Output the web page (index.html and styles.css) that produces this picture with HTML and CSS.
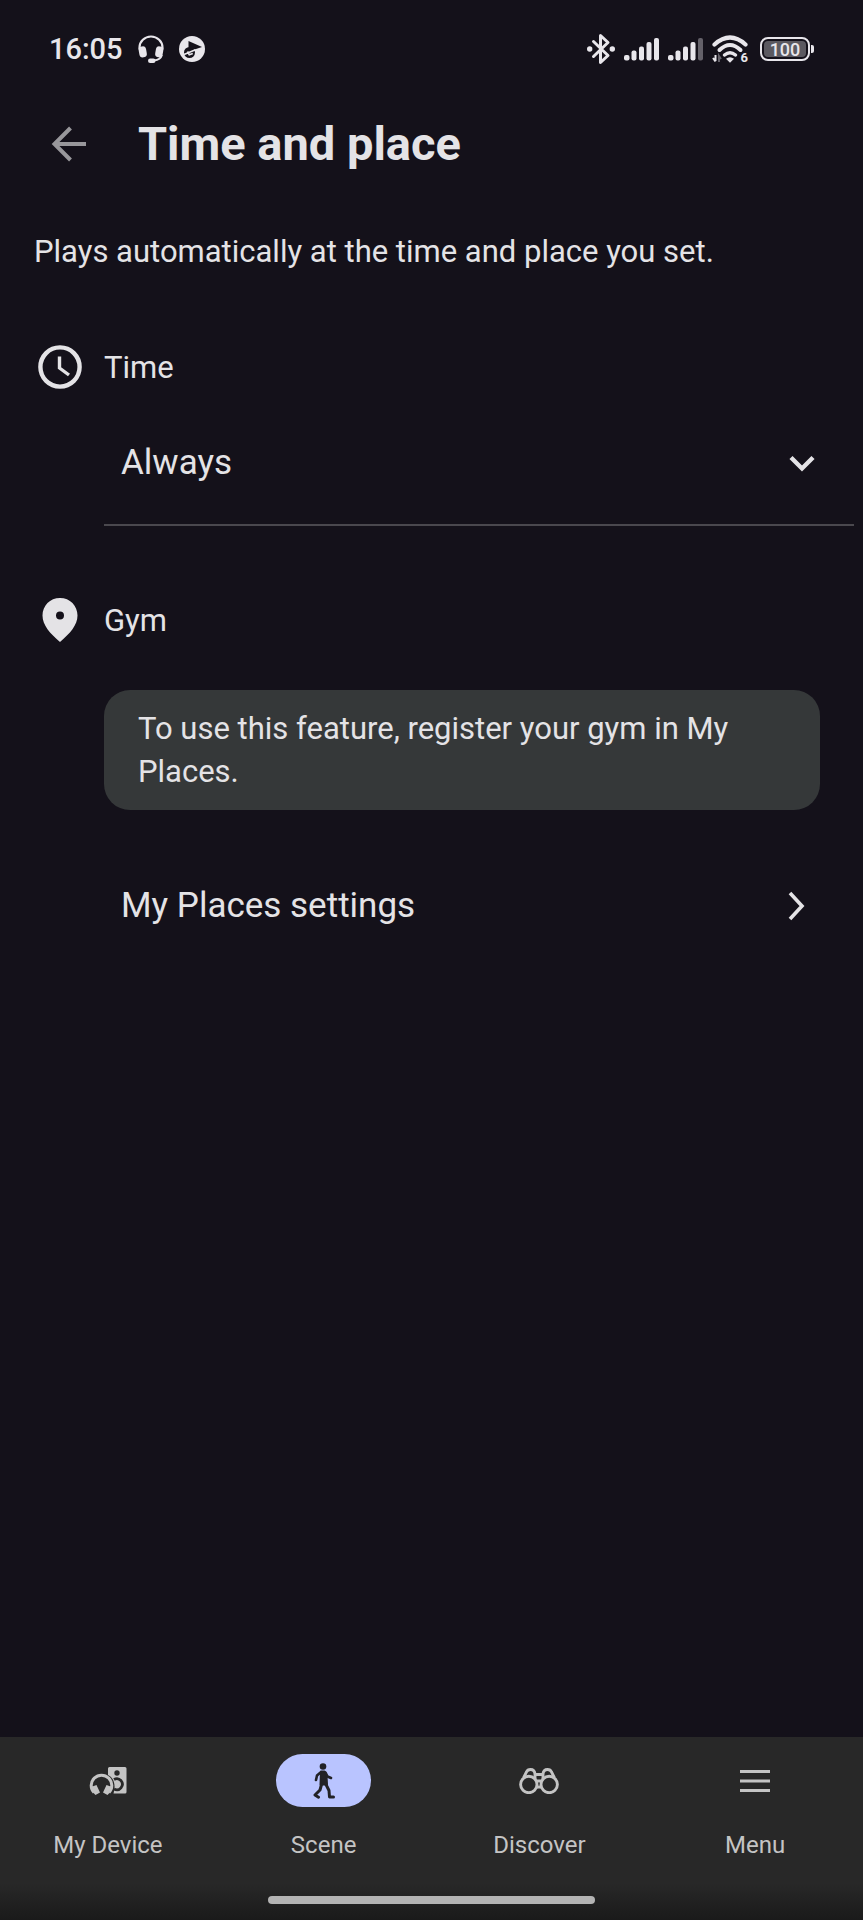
FILE: index.html
```html
<!DOCTYPE html>
<html lang="en">
<head>
<meta charset="utf-8">
<meta name="viewport" content="width=device-width, initial-scale=1">
<title>Time and place</title>
<link rel="stylesheet" href="styles.css">
</head>
<body class="screen">
<div class="status">
  <div class="status-side">
    <span class="clock">16:05</span>
    <svg class="status-icon" width="28" height="28" viewBox="0 0 28 28" fill="none" stroke="currentColor" aria-hidden="true">
      <path d="M2.500 14.500V12.500a11.500 11 0 0 1 23 0v2" stroke-width="2.200"/>
      <rect x="2" y="11.500" width="7.500" height="11" rx="3.500" fill="currentColor" stroke="none" transform="rotate(-10 5 17)"/>
      <rect x="18.500" y="11.500" width="7.500" height="11" rx="3.500" fill="currentColor" stroke="none" transform="rotate(10 23 17)"/>
      <path d="M25 20c-1 3.500-4 5-8 5.500" stroke-width="1.800"/>
      <rect x="11" y="23.500" width="7.500" height="4.500" rx="2.200" fill="currentColor" stroke="none"/>
    </svg>
    <svg class="status-icon" width="26" height="26" viewBox="0 0 26 26" aria-hidden="true">
      <circle cx="13" cy="13" r="13" fill="currentColor"/>
      <circle cx="10.500" cy="16.500" r="5.500" fill="#14111a"/>
      <path d="M9.500 5 23 11 9.500 15.500z" fill="#14111a"/>
      <path d="M5 18.500 16.500 13.800M8.500 15.500l1.800 3.200 3.500-1.200" stroke="#e8e6eb" stroke-width="1.700" fill="none"/>
    </svg>
  </div>
  <div class="status-side status-right">
    <svg width="28" height="32" viewBox="0 0 28 32" fill="none" stroke="currentColor" stroke-width="3" stroke-linejoin="round" stroke-linecap="round" aria-hidden="true">
      <path d="M6.500 8.500 21 22.500 13.500 29.500V2.500L21 9.500 6.500 23.500"/>
      <circle cx="2.700" cy="16" r="2.700" fill="currentColor" stroke="none"/>
      <circle cx="25.300" cy="16" r="2.700" fill="currentColor" stroke="none"/>
    </svg>
    <svg width="35" height="24" viewBox="0 0 35 24" fill="currentColor" aria-hidden="true">
      <rect x="0" y="18" width="5.500" height="5.500" rx="2"/><rect x="7.500" y="13.500" width="5" height="10" rx="2"/><rect x="15" y="9.500" width="5" height="14" rx="2"/><rect x="22.500" y="5" width="5" height="18.500" rx="2"/><rect x="30" y="1" width="5" height="22.500" rx="2"/>
    </svg>
    <svg width="35" height="24" viewBox="0 0 35 24" fill="currentColor" aria-hidden="true">
      <rect x="0" y="18" width="5.500" height="5.500" rx="2"/><rect x="7.500" y="13.500" width="5" height="10" rx="2"/><rect x="15" y="9.500" width="5" height="14" rx="2"/><rect x="22.500" y="5" width="5" height="18.500" rx="2"/><rect x="30" y="1" width="5" height="22.500" rx="2" opacity=".38"/>
    </svg>
    <div class="wifi">
      <svg width="36" height="28" viewBox="0 0 36 28" fill="none" stroke="currentColor" aria-hidden="true">
        <path d="M2.500 9.500Q18-4.500 33.500 9.500" stroke-width="4.200" stroke-linecap="round"/>
        <path d="M7.500 15Q18 5 28.500 15" stroke-width="4" stroke-linecap="round"/>
        <path d="M12.500 20Q18 15.500 23.500 20" stroke-width="3.500" stroke-linecap="round"/>
        <path d="m14 23.800 4 4 4-4q-4-3-8 0z" fill="currentColor" stroke="none"/>
        <path d="M3.500 20v6M1 23l2.500 3.500" stroke-width="2"/>
        <path d="M7 27v-6l2 3" stroke-width="2" opacity=".38"/>
      </svg>
      <span class="wifi-gen">6</span>
    </div>
    <div class="battery"><span class="battery-level">100</span></div>
  </div>
</div>

<header class="topbar">
  <button class="back" type="button" aria-label="Back">
    <svg width="36" height="36" viewBox="0 0 36 36" fill="none" stroke="currentColor" stroke-width="4" aria-hidden="true"><path d="M35 18H4M19.500 2 3.500 18l16 16"/></svg>
  </button>
  <h1 class="title">Time and place</h1>
</header>

<main class="content">
  <p class="intro">Plays automatically at the time and place you set.</p>

  <section class="group">
    <label class="group-head" for="time">
      <svg width="44" height="44" viewBox="0 0 44 44" fill="none" stroke="currentColor" aria-hidden="true"><circle cx="22" cy="22" r="19.600" stroke-width="4.400"/><path d="M21.500 11.500V23l9.500 7" stroke-width="3.400"/></svg>
      Time
    </label>
    <div class="select-row">
      <select class="select" id="time"><option>Always</option></select>
      <svg class="select-arrow" width="26" height="18" viewBox="0 0 26 18" fill="none" stroke="currentColor" stroke-width="4.400" aria-hidden="true"><path d="m2 3.500 11 11 11-11"/></svg>
    </div>
  </section>

  <section class="group">
    <h2 class="group-head">
      <svg width="44" height="44" viewBox="0 0 44 44" aria-hidden="true"><path fill="currentColor" fill-rule="evenodd" d="M22 0C12 0 4.500 7.800 4.500 17.500 4.500 27 12 35.500 22 44c10-8.500 17.500-17 17.500-26.500C39.500 7.800 32 0 22 0zm0 13.500a4 4 0 1 1 0 8 4 4 0 0 1 0-8z"/></svg>
      Gym
    </h2>
    <p class="notice">To use this feature, register your gym in My Places.</p>
    <a class="link-row" href="#places">
      My Places settings
      <svg width="18" height="30" viewBox="0 0 18 30" fill="none" stroke="currentColor" stroke-width="3.600" aria-hidden="true"><path d="m3 2 12 13L3 28"/></svg>
    </a>
  </section>
</main>

<footer class="bottom">
  <nav class="tabs">
    <a class="tab" href="#device">
      <span class="tab-icon">
        <svg width="38" height="30" viewBox="0 0 38 30" aria-hidden="true">
          <path fill="currentColor" d="M20.500 1H36a1.500 1.500 0 0 1 1.500 1.500V26a1.500 1.500 0 0 1-1.500 1.500H24.500C27 19 25 12 19 9V2.500A1.500 1.500 0 0 1 20.500 1z"/>
          <circle cx="28" cy="7" r="2.700" fill="#282828"/>
          <path d="M25 13.500a5.500 5.500 0 1 1 0 9.500" fill="none" stroke="#282828" stroke-width="2.800"/>
          <path d="M5 26.500A10.300 10.300 0 1 1 20 26.500" fill="none" stroke="currentColor" stroke-width="3"/>
          <path fill="currentColor" d="m2 21 5.500-2 3.500 7.500L6.500 29C4 27 2.500 24 2 21zm21 0-5.500-2-3.500 7.500 4.500 2.500c2.500-2 4-5 4.500-8z"/>
        </svg>
      </span>
      My Device
    </a>
    <a class="tab" href="#scene" aria-current="page">
      <span class="tab-icon tab-icon-active">
        <svg width="22" height="36" viewBox="0 0 22 36" fill="none" stroke="currentColor" stroke-linecap="round" stroke-linejoin="round" aria-hidden="true">
          <circle cx="10" cy="3.500" r="3.300" fill="currentColor" stroke="none"/>
          <path d="M8 8.500h3.500l2 4 .5 9H7.500z" fill="currentColor" stroke-width="2"/>
          <path d="M7.500 9.500 4 12.500 3 17M12.500 9.500l2 4 3.500 1.500" stroke-width="2.600"/>
          <path d="M8.500 21.500 7 27l-5 5 3.500 2.200M12.500 20.500l3.500 7 .5 6.500h4" stroke-width="3"/>
        </svg>
      </span>
      Scene
    </a>
    <a class="tab" href="#discover">
      <span class="tab-icon">
        <svg width="40" height="26" viewBox="0 0 40 26" fill="none" stroke="currentColor" stroke-width="2.900" aria-hidden="true">
          <circle cx="9.800" cy="16.500" r="8.200"/><circle cx="30.200" cy="16.500" r="8.200"/>
          <path d="M4.500 10 7.500 4q1-2.500 4-2.500 4 0 4.500 4.500v5M35.500 10l-3-6q-1-2.500-4-2.500-4 0-4.500 4.500v5M16 6.500h8M17 13h6M18 19h4"/>
        </svg>
      </span>
      Discover
    </a>
    <a class="tab" href="#menu">
      <span class="tab-icon">
        <svg width="30" height="22" viewBox="0 0 30 22" fill="currentColor" aria-hidden="true"><path d="M0 0h30v3H0zM0 9.500h30v3H0zM0 19h30v3H0z"/></svg>
      </span>
      Menu
    </a>
  </nav>
  <div class="home-area"><span class="home-bar"></span></div>
</footer>
</body>
</html>
```
FILE: styles.css
```css
* {
  box-sizing: border-box;
}

.screen {
  margin: 0;
  min-height: 100vh;
  display: flex;
  flex-direction: column;
  background: #14111a;
  color: #e4e3e6;
  font-family: Roboto, "Noto Sans", sans-serif;
  font-size: 31px;
  line-height: 43px;
}

.status {
  display: flex;
  justify-content: space-between;
  align-items: center;
  height: 98px;
  padding: 0 53px 0 49px;
  color: #e8e6eb;
}

.status-side {
  display: flex;
  align-items: center;
  gap: 14px;
}

.status-right {
  gap: 9px;
}

.clock {
  font-size: 29px;
  font-weight: 500;
}

.wifi {
  display: flex;
  position: relative;
}

.wifi-gen {
  position: absolute;
  right: 0;
  bottom: 0;
  font-size: 13px;
  font-weight: 700;
  line-height: 10px;
}

.battery {
  position: relative;
  display: flex;
  width: 50px;
  height: 24px;
  margin-left: 3px;
  padding: 2px;
  border: 2px solid currentColor;
  border-radius: 8px;
}

.battery::after {
  content: "";
  position: absolute;
  top: 6px;
  right: -6px;
  width: 3px;
  height: 8px;
  border-radius: 0 2px 2px 0;
  background: currentColor;
}

.battery-level {
  flex: 1;
  border-radius: 4px;
  background: #5b5960;
  font-size: 18px;
  font-weight: 500;
  line-height: 17px;
  text-align: center;
}

.topbar {
  display: flex;
  align-items: center;
  height: 92px;
  padding: 0 34px;
}

.back {
  display: flex;
  justify-content: center;
  width: 70px;
  padding: 17px 0;
  border: 0;
  background: none;
  color: #98979b;
}

.title {
  margin: 0 0 0 34px;
  font-size: 47px;
  font-weight: 700;
  line-height: 54px;
}

.content {
  flex: 1;
  padding: 40px 43px 40px 34px;
}

.intro {
  margin: 0;
}

.group {
  margin-top: 72px;
}

.group-head {
  display: flex;
  align-items: center;
  gap: 22px;
  margin: 0;
  padding-left: 4px;
  font-size: 31px;
  font-weight: 400;
}

.select-row {
  position: relative;
  display: flex;
  align-items: center;
  margin: 12px -34px 0 70px;
  border-bottom: 2px solid #4a484e;
}

.select {
  flex: 1;
  height: 123px;
  padding: 0 64px 0 17px;
  border: 0;
  appearance: none;
  background: none;
  color: inherit;
  font-family: inherit;
  font-size: 35px;
}

.select-arrow {
  position: absolute;
  right: 39px;
  pointer-events: none;
}

.notice {
  margin: 48px 0 0 70px;
  padding: 17px 34px;
  border-radius: 26px;
  background: #353839;
}

.link-row {
  display: flex;
  justify-content: space-between;
  align-items: center;
  margin: 54px 0 0 70px;
  padding: 20px 15px 20px 17px;
  color: inherit;
  font-size: 35px;
  text-decoration: none;
}

.bottom {
  background: linear-gradient(#282828 80%, #1a1a1a);
}

.tabs {
  display: grid;
  grid-template-columns: repeat(4, 1fr);
  padding-top: 17px;
}

.tab {
  display: flex;
  flex-direction: column;
  align-items: center;
  gap: 22px;
  color: #c4c4c4;
  font-size: 24px;
  line-height: 32px;
  text-decoration: none;
}

.tab-icon {
  display: flex;
  align-items: center;
  justify-content: center;
  width: 95px;
  height: 53px;
}

.tab-icon-active {
  border-radius: 27px;
  background: #b9c4ff;
  color: #222226;
}

.home-area {
  display: flex;
  justify-content: center;
  padding: 35px 0 16px;
}

.home-bar {
  width: 38%;
  height: 8px;
  border-radius: 4px;
  background: #b3b3b3;
}
```
